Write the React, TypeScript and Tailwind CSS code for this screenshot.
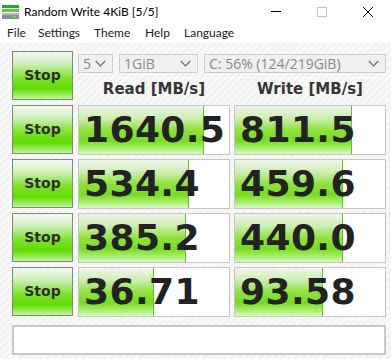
import React from "react";

const rows = [
  { read: "1640.5", write: "811.5", rw: 125, ww: 117 },
  { read: "534.4", write: "459.6", rw: 110, ww: 108 },
  { read: "385.2", write: "440.0", rw: 107, ww: 108 },
  { read: "36.71", write: "93.58", rw: 75, ww: 88 },
];

const Chevron = () => (
  <svg width="11" height="7" viewBox="0 0 11 7" className="shrink-0">
    <path d="M0.8 1 L5.5 5.8 L10.2 1" fill="none" stroke="#6a6a6a" strokeWidth="1.2" />
  </svg>
);

const Select = ({ label, w }: { label: string; w: string }) => (
  <div
    className={`${w} h-[19px] flex items-center justify-between pl-[4px] pr-[6px] border border-[#cfcfcf] bg-[#f0f0f0] text-[14px] text-[#8a8a8a] leading-none font-['Open_Sans',sans-serif]`}
  >
    <span>{label}</span>
    <Chevron />
  </div>
);

const StopButton = () => (
  <div className="w-[61px] h-[49px] flex items-center justify-center border border-[#7d8d7b] bg-[linear-gradient(to_bottom,#f6f9f4_0%,#d0efbc_25%,#7ee22a_55%,#5fdc00_78%,#c2f59c_100%)] text-[14px] font-bold text-[#2e2e2e] font-['DejaVu_Sans',sans-serif]">
    Stop
  </div>
);

const Cell = ({ value, bar }: { value: string; bar: number }) => (
  <div className="relative w-[152px] h-[50px] border border-[#c6c6c6] bg-white overflow-hidden">
    <div
      className="absolute left-0 top-0 bottom-0 border-r border-[#5cc51a] bg-[linear-gradient(to_bottom,#f0f5ec_0%,#cdeeb2_25%,#8fe23e_50%,#76dc1c_72%,#a6ef6c_88%,#daf9c4_100%)]"
      style={{ width: bar }}
    />
    <div className="relative h-full flex items-center pl-[5px] text-[36px] font-bold text-[#222] font-['DejaVu_Sans',sans-serif] leading-none tracking-[0.4px]">
      {value}
    </div>
  </div>
);

const DriveIcon = () => (
  <svg width="17" height="16" viewBox="0 0 17 16">
    <rect x="0" y="1" width="17" height="3" fill="#2aa52a" />
    <rect x="0" y="5" width="17" height="3" fill="#5ccf3c" />
    <rect x="0" y="9" width="17" height="6" fill="#8a8f94" />
    <rect x="0" y="9" width="17" height="2" fill="#b4b8bc" />
    <rect x="11" y="12" width="3" height="2" fill="#5ee04a" />
  </svg>
);

export default function App() {
  return (
    <div className="w-[391px] h-[359px] flex flex-col bg-white font-['Lato',sans-serif] overflow-hidden">
      <div className="h-[23px] flex items-center bg-white">
        <div className="pl-[2px] pr-[5px] flex items-center">
          <DriveIcon />
        </div>
        <span className="text-[12px] text-black">Random Write 4KiB [5/5]</span>
        <div className="ml-auto flex items-center h-full">
          <div className="w-[46px] flex justify-center">
            <div className="w-[10px] h-px bg-black" />
          </div>
          <div className="w-[46px] flex justify-center">
            <div className="w-[10px] h-[10px] border border-[#c4c4c4]" />
          </div>
          <div className="w-[46px] flex justify-center">
            <svg width="10" height="10" viewBox="0 0 10 10">
              <path d="M0 0 L10 10 M10 0 L0 10" stroke="#000" strokeWidth="1" />
            </svg>
          </div>
        </div>
      </div>
      <div className="h-[20px] flex items-center pl-[7px] text-[12px] text-[#222] bg-white">
        <span className="w-[31px]">File</span>
        <span className="w-[56px]">Settings</span>
        <span className="w-[51px]">Theme</span>
        <span className="w-[39px]">Help</span>
        <span>Language</span>
      </div>
      <div className="flex-1 flex flex-col pl-[12px] pt-[8px] bg-[repeating-linear-gradient(135deg,#f3f3f3_0px,#f3f3f3_3px,#fafafa_3px,#fafafa_5px)]">
        <div className="flex gap-[5px]">
          <StopButton />
          <div className="flex flex-col">
            <div className="flex gap-[6px] mt-[3px]">
              <Select label="5" w="w-[35px]" />
              <Select label="1GiB" w="w-[79px]" />
              <Select label="C: 56% (124/219GiB)" w="w-[182px]" />
            </div>
            <div className="flex gap-[4px] mt-[5px] text-[15px] font-bold text-[#363636] font-['DejaVu_Sans',sans-serif]">
              <div className="w-[152px] text-center">Read [MB/s]</div>
              <div className="w-[152px] text-center">Write [MB/s]</div>
            </div>
          </div>
        </div>
        <div className="flex flex-col gap-[4px] mt-[4px]">
          {rows.map((r, i) => (
            <div key={i} className="flex gap-[4px]">
              <div className="mr-px">
                <StopButton />
              </div>
              <Cell value={r.read} bar={r.rw} />
              <Cell value={r.write} bar={r.ww} />
            </div>
          ))}
        </div>
        <div className="mt-[8px] w-[374px] h-[30px] border-2 border-[#c8c8c8] bg-white" />
      </div>
    </div>
  );
}
